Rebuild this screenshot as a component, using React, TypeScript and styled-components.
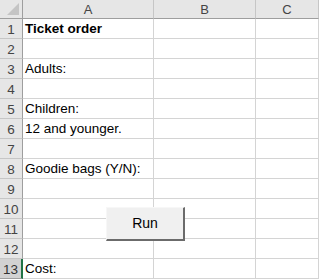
import styled, { createGlobalStyle } from 'styled-components'

const GlobalStyle = createGlobalStyle`
  html, body {
    margin: 0;
    padding: 0;
    background: #ffffff;
  }
  * {
    box-sizing: border-box;
  }
`

const Sheet = styled.div`
  position: relative;
  width: 320px;
  height: 279px;
  overflow: hidden;
  display: grid;
  grid-template-columns: 23px 131px 102px 63px 1px;
  grid-template-rows: 19px repeat(13, 20px);
  font-family: 'Liberation Sans', Arial, sans-serif;
  background: #ffffff;
`

const Corner = styled.div`
  position: relative;
  background: #e6e6e6;
  border-right: 1px solid #9e9e9e;
  border-bottom: 1px solid #9e9e9e;

  &::after {
    content: '';
    position: absolute;
    right: 3px;
    bottom: 3px;
    width: 0;
    height: 0;
    border-left: 12px solid transparent;
    border-bottom: 12px solid #c4c4c4;
  }
`

const ColHeader = styled.div`
  background: #e6e6e6;
  border-right: 1px solid #c6c6c6;
  border-bottom: 1px solid #9e9e9e;
  display: flex;
  align-items: center;
  justify-content: center;
  font-size: 13px;
  color: #444444;
  padding-top: 1px;
`

const RowHeader = styled.div<{ $active?: boolean }>`
  background: ${({ $active }) => ($active ? '#d2d2d2' : '#e6e6e6')};
  border-right: ${({ $active }) => ($active ? '2px solid #217346' : '1px solid #9e9e9e')};
  border-bottom: 1px solid ${({ $active }) => ($active ? '#9e9e9e' : '#c6c6c6')};
  display: flex;
  align-items: center;
  justify-content: center;
  font-size: 13.5px;
  color: ${({ $active }) => ($active ? '#333333' : '#444444')};
  padding-top: 1px;
`

const Cell = styled.div<{ $bold?: boolean }>`
  border-right: 1px solid #d4d4d4;
  border-bottom: 1px solid #d4d4d4;
  display: flex;
  align-items: flex-end;
  padding: 0 0 2px 2px;
  font-size: 13.5px;
  font-weight: ${({ $bold }) => ($bold ? 700 : 400)};
  color: #000000;
  white-space: nowrap;
  overflow: visible;
`

const Spacer = styled.div`
  background: #ffffff;
`

const RunButton = styled.button`
  position: absolute;
  left: 106px;
  top: 207px;
  width: 79px;
  height: 34px;
  margin: 0;
  padding: 0 0 1px;
  background: #f0f0f0;
  border-top: 1px solid #f7f7f7;
  border-left: 1px solid #f7f7f7;
  border-right: 2px solid #6b6b6b;
  border-bottom: 2px solid #6b6b6b;
  font-family: 'Liberation Sans', Arial, sans-serif;
  font-size: 14px;
  color: #000000;
  cursor: pointer;
`

const cells: Record<number, { text: string; bold?: boolean }> = {
  1: { text: 'Ticket order', bold: true },
  3: { text: 'Adults:' },
  5: { text: 'Children:' },
  6: { text: '12 and younger.' },
  8: { text: 'Goodie bags (Y/N):' },
  13: { text: 'Cost:' },
}

export default function App() {
  const rows = Array.from({ length: 13 }, (_, i) => i + 1)

  return (
    <>
      <GlobalStyle />
      <Sheet>
        <Corner />
        <ColHeader>A</ColHeader>
        <ColHeader>B</ColHeader>
        <ColHeader>C</ColHeader>
        <Spacer />
        {rows.map((r) => (
          <Row key={r} n={r} />
        ))}
        <RunButton type="button">Run</RunButton>
      </Sheet>
    </>
  )
}

function Row({ n }: { n: number }) {
  const c = cells[n]
  return (
    <>
      <RowHeader $active={n === 13}>{n}</RowHeader>
      <Cell $bold={c?.bold}>{c?.text}</Cell>
      <Cell />
      <Cell />
      <Spacer />
    </>
  )
}
